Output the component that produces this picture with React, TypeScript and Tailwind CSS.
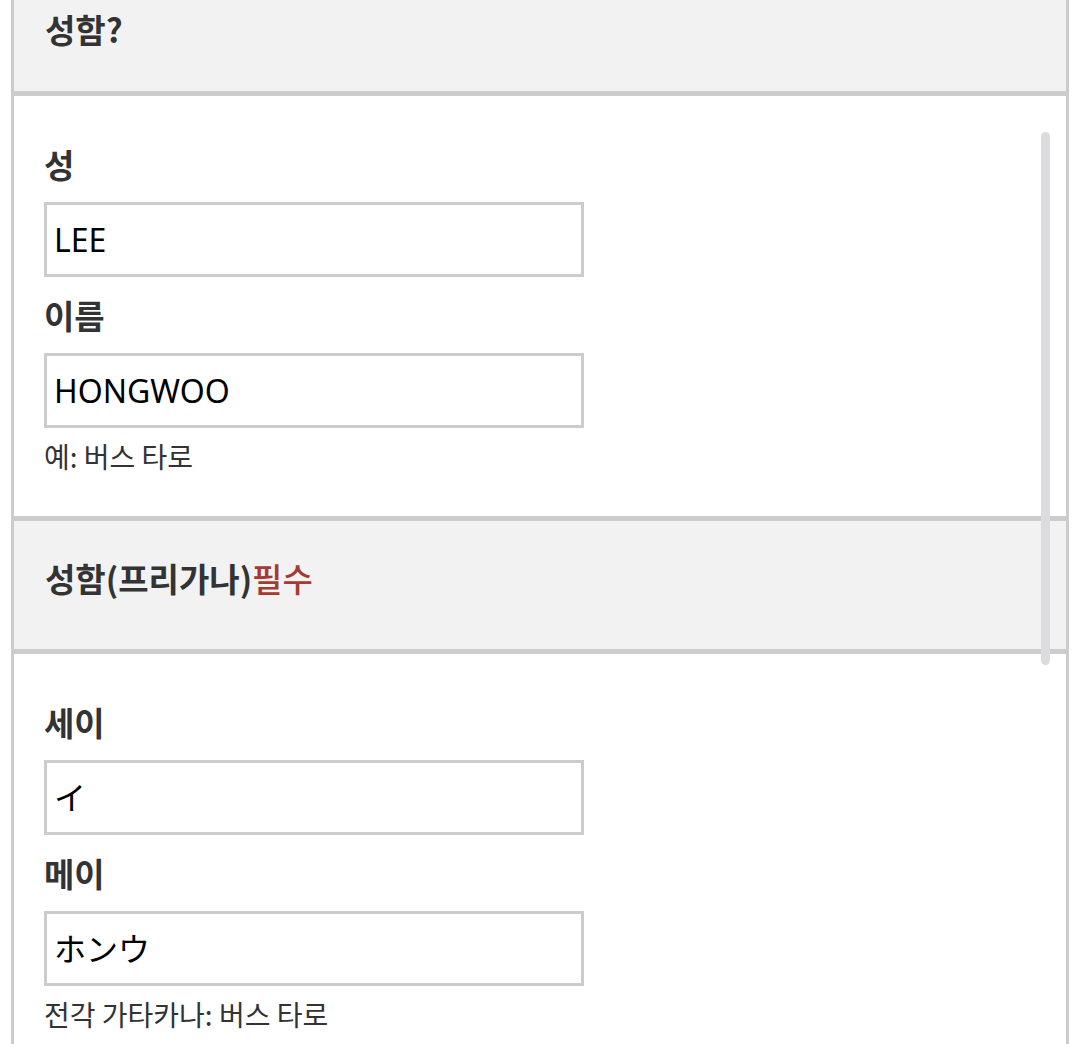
const LABEL_FONT = { fontFamily: '"Noto Sans CJK KR", "Noto Sans", sans-serif' };

function Field({ label, value }: { label: string; value: string }) {
  return (
    <div>
      <div className="text-[33px] leading-[45px] font-bold text-[#333]">{label}</div>
      <div className="mt-[15px] w-[540px] h-[75px] border-[3px] border-[#cccccc] bg-white flex items-center pl-[7px]">
        <span className="text-[32px] text-black" style={{ fontFamily: '"Noto Sans", "Noto Sans CJK JP", sans-serif' }}>
          {value}
        </span>
      </div>
    </div>
  );
}

function Section({ children }: { children: React.ReactNode }) {
  return <div className="bg-white pl-[30px] pt-[46px] pb-[42px]">{children}</div>;
}

export default function App() {
  return (
    <div className="w-[1080px] h-[1044px] bg-white overflow-hidden pl-[11px]" style={LABEL_FONT}>
      <div className="relative w-[1058px] h-[1100px] border-x-[3px] border-[#cccccc]">
        {/* first header, cut off by the scroll */}
        <div className="h-[96px] bg-[#f2f2f2] border-b-[5px] border-[#cccccc] pl-[31px] pt-[7px]">
          <div className="text-[33px] leading-[45px] font-bold text-[#333]">성함?</div>
        </div>

        <Section>
          <Field label="성" value="LEE" />
          <div className="mt-[16px]">
            <Field label="이름" value="HONGWOO" />
          </div>
          <div className="mt-[10px] text-[28px] leading-[36px] text-[#333]">예: 버스 타로</div>
        </Section>

        <div className="h-[138px] bg-[#f2f2f2] border-y-[5px] border-[#cccccc] pl-[31px] pt-[35px]">
          <div className="text-[33px] leading-[45px] font-bold text-[#333]">
            성함(프리가나)<span className="font-medium text-[#a63a32]">필수</span>
          </div>
        </div>

        <Section>
          <Field label="세이" value="イ" />
          <div className="mt-[16px]">
            <Field label="메이" value="ホンウ" />
          </div>
          <div className="mt-[10px] text-[28px] leading-[36px] text-[#333]">전각 가타카나: 버스 타로</div>
        </Section>

        {/* scrollbar thumb */}
        <div className="absolute left-[1027px] top-[132px] w-[9px] h-[533px] rounded-full bg-[#dcdcde]" />
      </div>
    </div>
  );
}
